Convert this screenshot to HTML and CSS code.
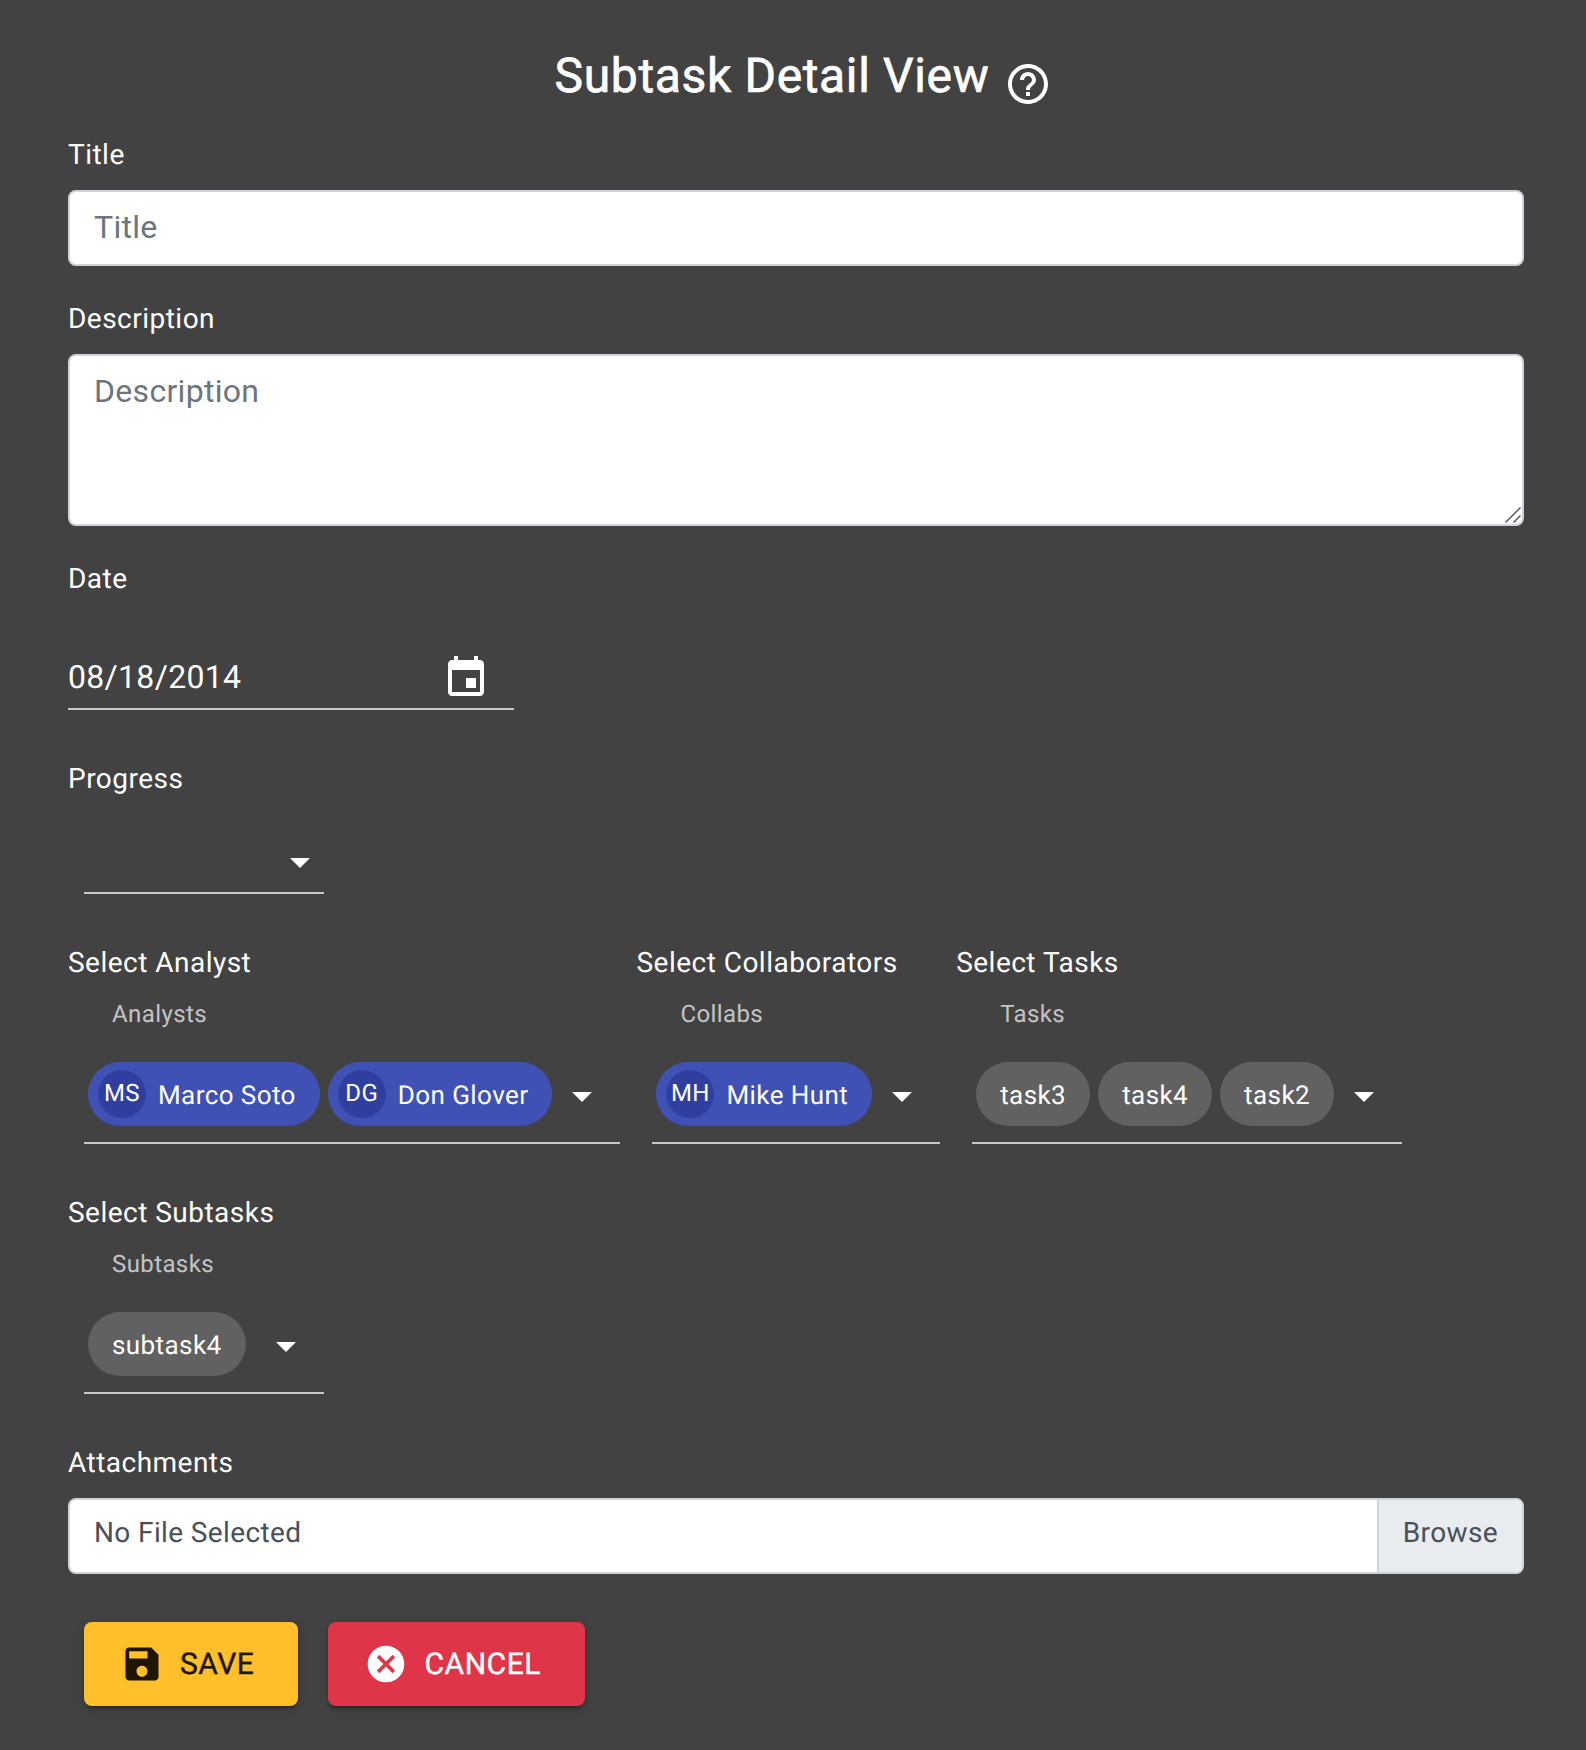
FILE: index.html
```html
<!DOCTYPE html>
<html lang="en">
<head>
<meta charset="utf-8">
<title>Subtask Detail View</title>
<link rel="stylesheet" href="styles.css">
</head>
<body>
<main class="page">
  <header class="heading">
    <h1 class="heading-text">Subtask Detail View</h1>
    <svg class="icon-48" viewBox="0 0 24 24"><path d="M11 18h2v-2h-2v2zm1-16C6.48 2 2 6.48 2 12s4.48 10 10 10 10-4.48 10-10S17.52 2 12 2zm0 18c-4.41 0-8-3.59-8-8s3.59-8 8-8 8 3.59 8 8-3.59 8-8 8zm0-14c-2.21 0-4 1.79-4 4h2c0-1.1.9-2 2-2s2 .9 2 2c0 2-3 1.75-3 5h2c0-2.25 3-2.5 3-5 0-2.21-1.79-4-4-4z"/></svg>
  </header>

  <label class="label">Title</label>
  <input class="control" type="text" placeholder="Title">

  <label class="label gap-30">Description</label>
  <div class="textarea-wrap">
    <textarea class="control textarea" placeholder="Description"></textarea>
    <svg class="grip" viewBox="0 0 16 16"><path d="M0.5 15.5L15.5 0.5M8.5 15.5L15.5 8.5"/></svg>
  </div>

  <label class="label gap-30">Date</label>
  <div class="date-field">
    <span>08/18/2014</span>
    <svg class="icon-48 date-icon" viewBox="0 0 24 24"><path d="M17 12h-5v5h5v-5zM16 1v2H8V1H6v2H5c-1.11 0-1.99.9-1.99 2L3 19c0 1.1.89 2 2 2h14c1.1 0 2-.9 2-2V5c0-1.1-.9-2-2-2h-1V1h-2zm3 18H5V8h14v11z"/></svg>
  </div>

  <label class="label gap-46">Progress</label>
  <div class="progress-select">
    <svg class="icon-48" viewBox="0 0 24 24"><path d="M7 10l5 5 5-5z"/></svg>
  </div>

  <div class="select-row gap-46">
    <section class="select-col">
      <label class="label">Select Analyst</label>
      <div class="sublabel">Analysts</div>
      <div class="chip-select">
        <div class="chips">
          <span class="chip chip-primary"><span class="avatar">MS</span><span class="chip-label">Marco Soto</span></span>
          <span class="chip chip-primary"><span class="avatar">DG</span><span class="chip-label">Don Glover</span></span>
        </div>
        <svg class="icon-48" viewBox="0 0 24 24"><path d="M7 10l5 5 5-5z"/></svg>
      </div>
    </section>
    <section class="select-col">
      <label class="label">Select Collaborators</label>
      <div class="sublabel">Collabs</div>
      <div class="chip-select">
        <div class="chips">
          <span class="chip chip-primary"><span class="avatar">MH</span><span class="chip-label">Mike Hunt</span></span>
        </div>
        <svg class="icon-48" viewBox="0 0 24 24"><path d="M7 10l5 5 5-5z"/></svg>
      </div>
    </section>
    <section class="select-col">
      <label class="label">Select Tasks</label>
      <div class="sublabel">Tasks</div>
      <div class="chip-select">
        <div class="chips">
          <span class="chip"><span class="chip-label">task3</span></span>
          <span class="chip"><span class="chip-label">task4</span></span>
          <span class="chip"><span class="chip-label">task2</span></span>
        </div>
        <svg class="icon-48" viewBox="0 0 24 24"><path d="M7 10l5 5 5-5z"/></svg>
      </div>
    </section>
  </div>

  <div class="select-row gap-46">
    <section class="select-col">
      <label class="label">Select Subtasks</label>
      <div class="sublabel">Subtasks</div>
      <div class="chip-select">
        <div class="chips">
          <span class="chip"><span class="chip-label">subtask4</span></span>
        </div>
        <svg class="icon-48" viewBox="0 0 24 24"><path d="M7 10l5 5 5-5z"/></svg>
      </div>
    </section>
  </div>

  <label class="label gap-46">Attachments</label>
  <div class="file-input">
    <span class="file-name">No File Selected</span>
    <span class="file-browse">Browse</span>
  </div>

  <div class="actions">
    <button class="btn btn-save" type="button">
      <svg class="icon-44" viewBox="0 0 24 24"><path d="M17 3H5c-1.11 0-2 .9-2 2v14c0 1.1.89 2 2 2h14c1.1 0 2-.9 2-2V7l-4-4zm-5 16c-1.66 0-3-1.34-3-3s1.34-3 3-3 3 1.34 3 3-1.34 3-3 3zm3-10H5V5h10v4z"/></svg>
      <span>Save</span>
    </button>
    <button class="btn btn-cancel" type="button">
      <svg class="icon-44" viewBox="0 0 24 24"><path d="M12 2C6.47 2 2 6.47 2 12s4.47 10 10 10 10-4.47 10-10S17.53 2 12 2zm5 13.59L15.59 17 12 13.41 8.41 17 7 15.59 10.59 12 7 8.41 8.41 7 12 10.59 15.59 7 17 8.41 13.41 12 17 15.59z"/></svg>
      <span>Cancel</span>
    </button>
  </div>
</main>
</body>
</html>
```

FILE: styles.css
```css
* { box-sizing: border-box; }

html, body { margin: 0; background: #424242; }

body {
  color: #fff;
  font-family: Roboto, "Liberation Sans", sans-serif;
  font-size: 28px;
  letter-spacing: 0.48px;
  text-rendering: geometricPrecision;
}

.page {
  height: 1750px;
  padding: 0 62px 0 68px;
  display: flex;
  flex-direction: column;
  align-items: flex-start;
}

svg { fill: currentColor; display: block; flex: none; }
.icon-48 { width: 48px; height: 48px; }
.icon-44 { width: 44px; height: 44px; }

.heading {
  width: 100%;
  height: 132px;
  padding: 44px 0 0 15px;
  display: flex;
  justify-content: center;
  align-items: flex-start;
  gap: 15px;
}

.heading-text {
  margin: 0;
  font-size: 48px;
  font-weight: 400;
  -webkit-text-stroke: 0.7px #fff;
  line-height: 64px;
  letter-spacing: 0.65px;
}

.heading .icon-48 { margin-top: 16px; }

.label {
  display: block;
  height: 44px;
  line-height: 46px;
  margin-bottom: 14px;
}

.gap-30 { margin-top: 30px; }
.gap-46 { margin-top: 46px; }

.control {
  display: block;
  width: 100%;
  height: 76px;
  padding: 11px 24px 13px;
  background: #fff;
  border: 2px solid #ced4da;
  border-radius: 8px;
  color: #495057;
  font: inherit;
  font-size: 32px;
  line-height: 48px;
  letter-spacing: 0.3px;
  outline: none;
}

.control::placeholder { color: #6c757d; opacity: 1; }

.textarea-wrap { position: relative; width: 100%; }

.textarea { height: 172px; resize: none; }

.grip {
  position: absolute;
  right: 3px;
  bottom: 3px;
  width: 16px;
  height: 16px;
  fill: none;
  stroke: #5a5a5a;
  stroke-width: 1.5;
}

.date-field {
  width: 446px;
  height: 56px;
  margin-top: 40px;
  padding-right: 24px;
  border-bottom: 2px solid #c8c8c8;
  display: flex;
  justify-content: space-between;
  align-items: flex-start;
  font-size: 32px;
  line-height: 46px;
  letter-spacing: 0.3px;
}

.progress-select {
  width: 240px;
  height: 56px;
  margin: 24px 0 0 16px;
  padding-bottom: 6px;
  border-bottom: 2px solid #c8c8c8;
  display: flex;
  justify-content: flex-end;
  align-items: flex-end;
}

.select-row { display: flex; gap: 0; }

.select-col { padding-right: 16px; }
.select-col:last-child { padding-right: 0; }

.select-col .label { margin-bottom: 0; }

.sublabel {
  height: 36px;
  margin: 11px 0 0 44px;
  line-height: 38px;
  font-size: 24px;
  letter-spacing: 0.4px;
  color: rgba(255, 255, 255, 0.7);
}

.chip-select {
  min-width: 240px;
  margin: 31px 0 0 16px;
  padding: 0 14px 16px 4px;
  border-bottom: 2px solid #c8c8c8;
  display: flex;
  justify-content: space-between;
  align-items: center;
}

.chips { display: flex; gap: 8px; }

.chip-select .icon-48 { margin: 4px 0 0 6px; }

.chip {
  height: 64px;
  border-radius: 32px;
  background: #616161;
  display: inline-flex;
  align-items: center;
  font-size: 26px;
  letter-spacing: 0.42px;
}

.chip-primary { background: #3f51b5; }

.chip-label { padding: 3px 24px 0; white-space: nowrap; }

.avatar {
  width: 48px;
  height: 48px;
  margin: 0 -12px 0 10px;
  padding-bottom: 2px;
  border-radius: 50%;
  background: #303f9f;
  display: flex;
  align-items: center;
  justify-content: center;
  font-size: 24px;
}

.file-input {
  width: 100%;
  height: 76px;
  background: #fff;
  border: 2px solid #ced4da;
  border-radius: 8px;
  display: flex;
  overflow: hidden;
  color: #495057;
  font-size: 28px;
  line-height: 48px;
  letter-spacing: 0.38px;
}

.file-name { flex: 1; padding: 9px 24px 11px; }

.file-browse {
  padding: 9px 24px 11px;
  background: #e9ecef;
  border-left: 2px solid #ced4da;
}

.actions {
  display: flex;
  gap: 30px;
  margin: 48px 0 0 16px;
}

.btn {
  height: 84px;
  padding: 0 44px 0 36px;
  border: 0;
  border-radius: 8px;
  display: flex;
  align-items: center;
  gap: 16px;
  font-family: inherit;
  font-size: 30px;
  font-weight: 400;
  -webkit-text-stroke: 0.4px currentColor;
  letter-spacing: 0.55px;
  text-transform: uppercase;
  text-rendering: geometricPrecision;
  box-shadow: 0 6px 2px -4px rgba(0,0,0,.2), 0 4px 4px 0 rgba(0,0,0,.14), 0 2px 10px 0 rgba(0,0,0,.12);
}

.btn-save { background: #ffc02c; color: #1f1600; }
.btn-cancel { background: #de3548; color: #fff; }
```
